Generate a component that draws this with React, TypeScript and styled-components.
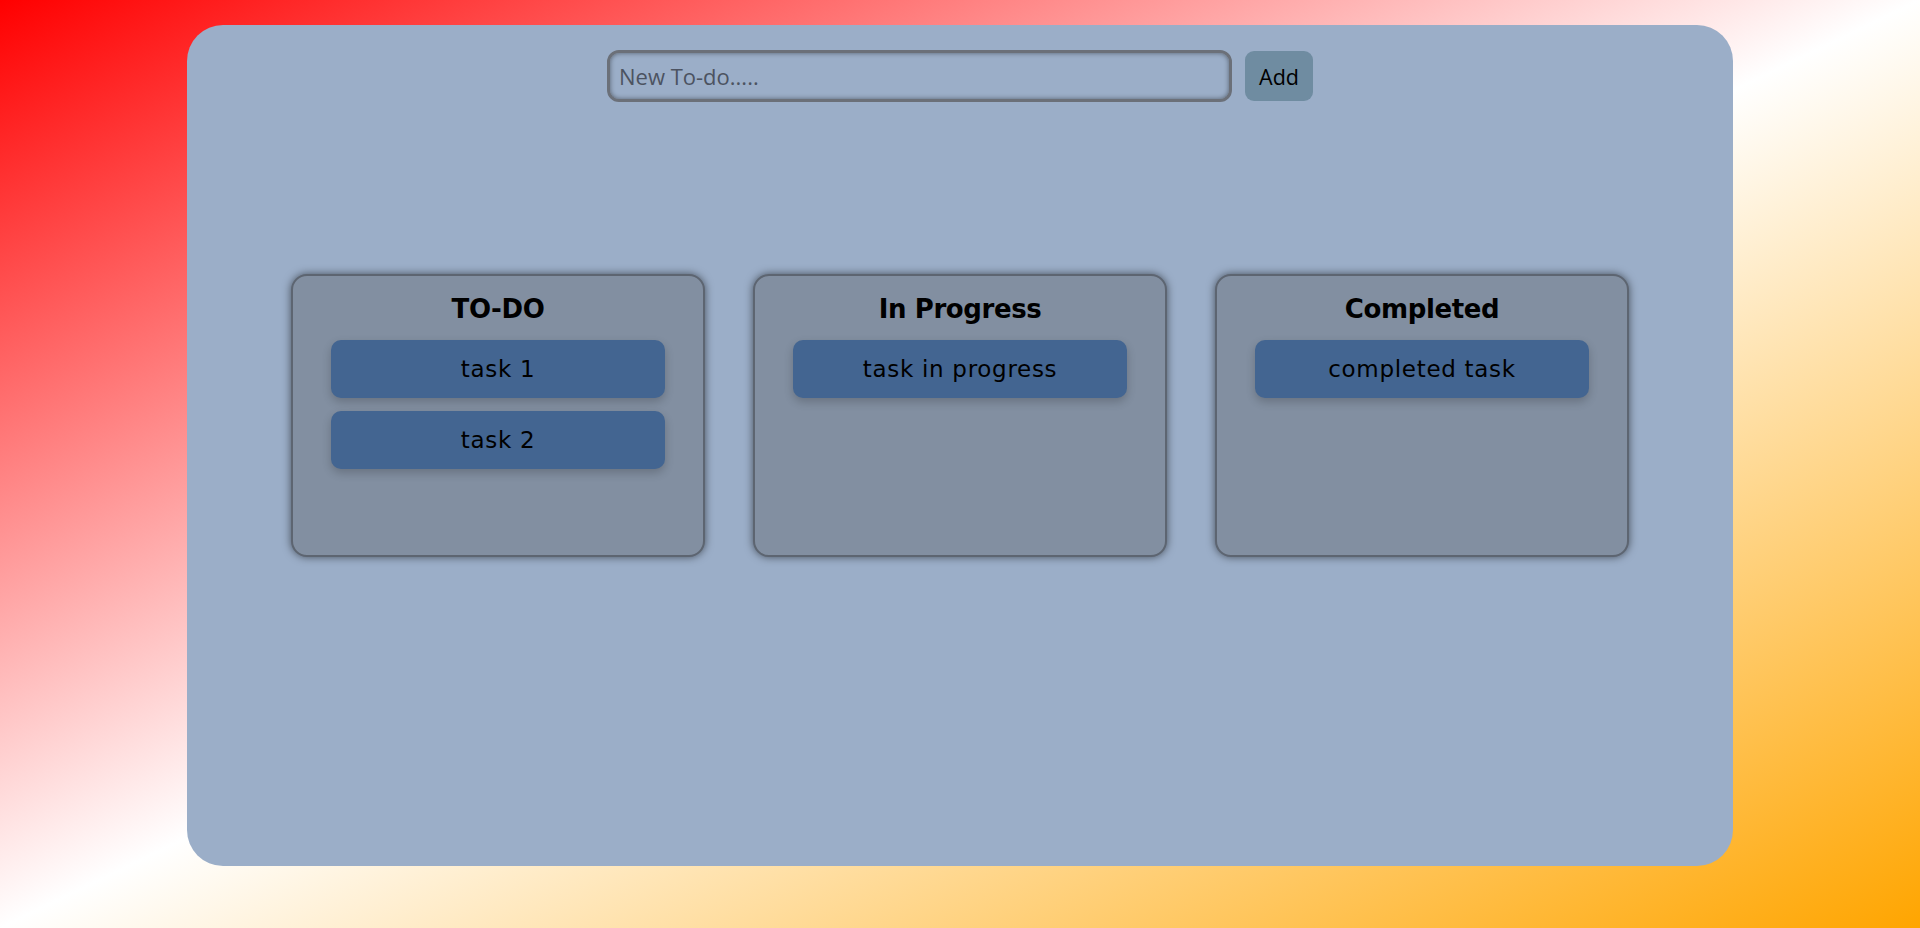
import React from 'react';
import styled, { createGlobalStyle } from 'styled-components';

const GlobalStyle = createGlobalStyle`
  html, body {
    margin: 0;
    padding: 0;
  }
  body {
    font-family: "DejaVu Sans", "Liberation Sans", sans-serif;
    background: linear-gradient(to bottom right, #ff0000, #ffffff, #ffa500);
    min-height: 100vh;
  }
`;

interface Column {
  title: string;
  tasks: string[];
}

const columns: Column[] = [
  { title: 'TO-DO', tasks: ['task 1', 'task 2'] },
  { title: 'In Progress', tasks: ['task in progress'] },
  { title: 'Completed', tasks: ['completed task'] },
];

const App: React.FC = () => {
  return (
    <>
      <GlobalStyle />
      <Page>
        <Board>
          <Form onSubmit={(e) => e.preventDefault()}>
            <TodoInput type="text" placeholder="New To-do....." />
            <AddButton type="submit">Add</AddButton>
          </Form>
          <Columns>
            {columns.map((col) => (
              <ColumnBox key={col.title}>
                <ColumnTitle>{col.title}</ColumnTitle>
                <TaskList>
                  {col.tasks.map((t) => (
                    <Task key={t}>{t}</Task>
                  ))}
                </TaskList>
              </ColumnBox>
            ))}
          </Columns>
        </Board>
      </Page>
    </>
  );
};

const Page = styled.div`
  min-height: 100vh;
  padding-top: 25px;
  box-sizing: border-box;
`;

const Board = styled.div`
  width: 1546px;
  height: 841px;
  margin: 0 auto;
  background: #9baec8;
  border-radius: 36px;
  padding-top: 25px;
  box-sizing: border-box;
`;

const Form = styled.form`
  display: flex;
  align-items: center;
  justify-content: center;
  gap: 13px;
  margin: 0;
`;

const TodoInput = styled.input`
  width: 625px;
  height: 52px;
  box-sizing: border-box;
  background: #9baec8;
  border: 3px solid #6b7079;
  border-radius: 12px;
  box-shadow: inset 0 0 5px rgba(0, 0, 0, 0.45);
  padding: 0 9px;
  font-family: "Open Sans", "Noto Sans", sans-serif;
  font-size: 22px;
  color: #222;
  outline: none;

  &::placeholder {
    color: #4c5361;
  }
`;

const AddButton = styled.button`
  width: 68px;
  height: 50px;
  border: none;
  border-radius: 9px;
  background: #6f8ca1;
  font-family: "Open Sans", "Noto Sans", sans-serif;
  font-size: 21.5px;
  color: #000;
  cursor: pointer;
`;

const Columns = styled.div`
  display: flex;
  justify-content: center;
  gap: 48px;
  margin-top: 172px;
`;

const ColumnBox = styled.div`
  width: 414px;
  height: 283px;
  box-sizing: border-box;
  background: #828fa1;
  border: 2px solid #5d6571;
  border-radius: 16px;
  box-shadow: 0 0 8px rgba(0, 0, 0, 0.55);
  padding: 18px 38px 0;
`;

const ColumnTitle = styled.h2`
  margin: 0 0 16px;
  text-align: center;
  font-size: 26px;
  letter-spacing: -0.4px;
  font-weight: bold;
  color: #000;
`;

const TaskList = styled.div`
  display: flex;
  flex-direction: column;
  gap: 13px;
`;

const Task = styled.div`
  height: 58px;
  display: flex;
  align-items: center;
  justify-content: center;
  background: #436591;
  border-radius: 10px;
  box-shadow: 0 4px 10px rgba(0, 0, 0, 0.2);
  font-size: 23px;
  color: #000;
  letter-spacing: 0.7px;
`;

export default App;
